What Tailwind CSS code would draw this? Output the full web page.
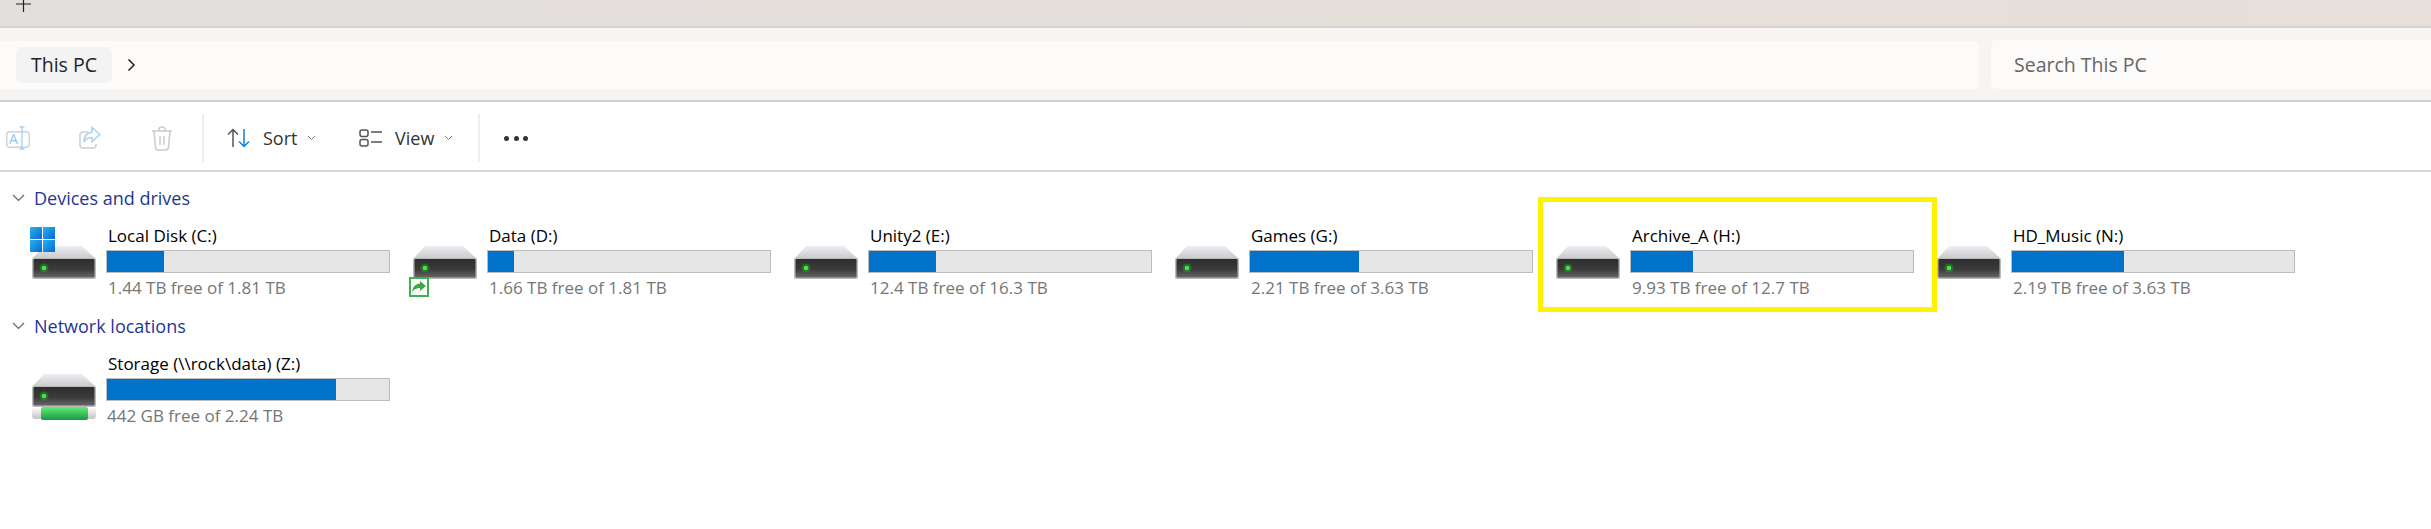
<!DOCTYPE html>
<html lang="en">
<head>
  <meta charset="UTF-8" />
  <title>This PC</title>
  <script src="https://cdn.jsdelivr.net/npm/@tailwindcss/browser@4"></script>
</head>
<body class="bg-white w-[2431px] h-[529px] overflow-hidden relative font-['Open_Sans',sans-serif]">

  <!-- shared drive icon -->
  <svg class="absolute w-0 h-0">
    <defs>
      <linearGradient id="driveTop" x1="0" y1="0" x2="0" y2="1"><stop offset="0" stop-color="#eeeff1"/><stop offset="1" stop-color="#c6c8cc"/></linearGradient>
      <linearGradient id="driveBody" x1="0" y1="0" x2="0" y2="1"><stop offset="0" stop-color="#2e2e2e"/><stop offset="0.55" stop-color="#3a3a3a"/><stop offset="1" stop-color="#666"/></linearGradient>
      <linearGradient id="netGreen" x1="0" y1="0" x2="0" y2="1"><stop offset="0" stop-color="#62ec70"/><stop offset="1" stop-color="#16994a"/></linearGradient>
      <linearGradient id="netGray" x1="0" y1="0" x2="0" y2="1"><stop offset="0" stop-color="#fafafa"/><stop offset="1" stop-color="#c4c4c4"/></linearGradient>
      <linearGradient id="winBlue" x1="0" y1="0" x2="1" y2="1"><stop offset="0" stop-color="#2cb0ee"/><stop offset="1" stop-color="#0669d2"/></linearGradient>
      <symbol id="drive" viewBox="0 0 64 33">
        <path d="M12 0H50L64 13H0Z" fill="url(#driveTop)"/>
        <rect x="0" y="12" width="64" height="21" rx="2" fill="#b9b9b9"/>
        <rect x="1.500" y="13" width="61" height="18.500" rx="1" fill="url(#driveBody)"/>
        <circle cx="12" cy="22" r="4.500" fill="#27e327" opacity="0.250"/>
        <circle cx="12" cy="22" r="2.300" fill="#36f03a"/>
      </symbol>
    </defs>
  </svg>

  <!-- title strip -->
  <div class="h-[28px] bg-[linear-gradient(90deg,#e3dfdd,#e7dfd9)] border-b-2 border-[#d8d3ce] relative overflow-hidden">
    <svg class="absolute left-[16px] top-[-3px]" width="15" height="15" fill="none" stroke="#222" stroke-width="1.200"><path d="M7.500 0v15M0 7h15"/></svg>
  </div>

  <!-- address row -->
  <div class="h-[74px] bg-[#f7f5f3] border-b-2 border-[#d3d0cc] pt-[13px] flex gap-[12px]">
    <div class="w-[1979px] h-[48px] bg-[#fcfbfa] rounded-r-[6px] flex items-center pl-[16px]">
      <div class="w-[96px] h-[36px] bg-[#f3f3f3] rounded-[7px] flex items-center justify-center text-[19.500px] text-[#222]">This PC</div>
      <svg class="ml-[15px]" width="9" height="14" fill="none" stroke="#222" stroke-width="1.500"><path d="M1.500 1.500 7 7l-5.500 5.500"/></svg>
    </div>
    <div class="flex-1 h-[49px] -mt-px bg-[#fcfbfa] rounded-l-[6px] flex items-center pl-[23px] text-[19.500px] text-[#666]">Search This PC</div>
  </div>

  <!-- command bar -->
  <div class="h-[70px] pt-[4px] border-b-2 border-[#d9d6d3] flex items-center text-[18px] text-[#333]">
    <svg class="ml-[6px]" width="24" height="24" fill="none" stroke-width="1.400">
      <rect x="0.700" y="5.700" width="22.600" height="15.600" rx="3" stroke="#c9d3da"/>
      <path d="M16 1v22M13.500 1h5M13.500 23h5" stroke="#a6d2f3"/>
      <text x="3" y="18" font-size="14" fill="#8fc6f0" stroke="none">A</text>
    </svg>
    <svg class="ml-[49px]" width="22" height="24" fill="none" stroke-width="1.500">
      <path d="M9 6H4a3 3 0 0 0-3 3v10a3 3 0 0 0 3 3h10a3 3 0 0 0 3-3v-1" stroke="#c9d0d6"/>
      <path d="M13 1.500 21 8.500l-8 7v-4c-4 0-6.500 1.500-8 4.500 0-6 3-9 8-10z" stroke="#a6d2f3"/>
    </svg>
    <svg class="ml-[50px]" width="22" height="25" fill="none" stroke="#cbcbcb" stroke-width="1.500">
      <path d="M1 5h20M3 5l1.500 16a3 3 0 0 0 3 3h7a3 3 0 0 0 3-3L19 5M8 5V3.500A2.500 2.500 0 0 1 10.500 1h1A2.500 2.500 0 0 1 14 3.500V5M9 10v9M13 10v9"/>
    </svg>
    <div class="ml-[29px] w-[2px] h-[48px] bg-[#eeeeee]"></div>
    <svg class="ml-[23px]" width="24" height="20" fill="none" stroke-width="1.500">
      <path d="M6 19V1.500M1 6.500l5-5 5 5" stroke="#555"/>
      <path d="M17 1v17.500M12 13.500l5 5 5-5" stroke="#0a84e0"/>
    </svg>
    <span class="ml-[12px] w-[34px]">Sort</span>
    <svg class="ml-[10px]" width="9" height="6" fill="none" stroke="#777"><path d="M1 1l3.500 3.500L8 1"/></svg>
    <svg class="ml-[43px]" width="24" height="18" fill="none" stroke="#555" stroke-width="1.500">
      <rect x="1" y="1" width="8" height="6.500" rx="2"/><rect x="1" y="10.500" width="8" height="6.500" rx="2"/>
      <path d="M12 3h11M12 13h11"/>
    </svg>
    <span class="ml-[12px] w-[38px]">View</span>
    <svg class="ml-[11px]" width="9" height="6" fill="none" stroke="#777"><path d="M1 1l3.500 3.500L8 1"/></svg>
    <div class="ml-[25px] w-[2px] h-[48px] bg-[#eeeeee]"></div>
    <div class="ml-[24px] flex gap-[4.500px]">
      <span class="w-[5px] h-[5px] rounded-full bg-[#333]"></span>
      <span class="w-[5px] h-[5px] rounded-full bg-[#333]"></span>
      <span class="w-[5px] h-[5px] rounded-full bg-[#333]"></span>
    </div>
  </div>

  <!-- Devices and drives -->
  <section class="pt-[14px]">
    <div class="h-[24px] flex items-center pl-[12px] text-[18px] text-[#1e3796]">
      <svg width="13" height="8" fill="none" stroke="#666" stroke-width="1.200"><path d="M1 1l5.500 5.500L12 1"/></svg>
      <span class="ml-[9px]">Devices and drives</span>
    </div>
    <div class="mt-[14px] pl-[25px] flex">
      <div class="w-[381px] h-[76px] flex relative">
        <svg class="w-[64px] h-[33px] ml-[7px] mt-[22px]"><use href="#drive"/></svg>
        <svg class="absolute left-[5px] top-[3px]" width="25" height="25" viewBox="0 0 25 25" fill="url(#winBlue)"><rect width="12" height="12"/><rect x="13" width="12" height="12"/><rect y="13" width="12" height="12"/><rect x="13" y="13" width="12" height="12"/></svg>
        <div class="ml-[10px] w-[284px]">
          <div class="h-[24px] pl-[2px] flex items-center text-[17px] text-black">Local Disk (C:)</div>
          <div class="mt-[2px] h-[23px] border border-[#bcbcbc] bg-[#e6e6e6]"><div class="h-full w-[57px] bg-[#0072c9]"></div></div>
          <div class="mt-[3px] h-[24px] pl-[2px] flex items-center text-[17px] text-[#767676]">1.44 TB free of 1.81 TB</div>
        </div>
      </div>
      <div class="w-[381px] h-[76px] flex relative">
        <svg class="w-[64px] h-[33px] ml-[7px] mt-[22px]"><use href="#drive"/></svg>
        <div class="absolute left-[3px] top-[53px] w-[20px] h-[20px] border-2 border-[#3cb44a] bg-white flex items-center justify-center">
          <svg width="14" height="12" viewBox="0 0 14 12" fill="#3aa648"><path d="M8 0l6 5-6 5V7C5 7 2 8 0 11c.500-5 3.500-8 8-8.500z"/></svg>
        </div>
        <div class="ml-[10px] w-[284px]">
          <div class="h-[24px] pl-[2px] flex items-center text-[17px] text-black">Data (D:)</div>
          <div class="mt-[2px] h-[23px] border border-[#bcbcbc] bg-[#e6e6e6]"><div class="h-full w-[26px] bg-[#0072c9]"></div></div>
          <div class="mt-[3px] h-[24px] pl-[2px] flex items-center text-[17px] text-[#767676]">1.66 TB free of 1.81 TB</div>
        </div>
      </div>
      <div class="w-[381px] h-[76px] flex">
        <svg class="w-[64px] h-[33px] ml-[7px] mt-[22px]"><use href="#drive"/></svg>
        <div class="ml-[10px] w-[284px]">
          <div class="h-[24px] pl-[2px] flex items-center text-[17px] text-black">Unity2 (E:)</div>
          <div class="mt-[2px] h-[23px] border border-[#bcbcbc] bg-[#e6e6e6]"><div class="h-full w-[67px] bg-[#0072c9]"></div></div>
          <div class="mt-[3px] h-[24px] pl-[2px] flex items-center text-[17px] text-[#767676]">12.4 TB free of 16.3 TB</div>
        </div>
      </div>
      <div class="w-[381px] h-[76px] flex">
        <svg class="w-[64px] h-[33px] ml-[7px] mt-[22px]"><use href="#drive"/></svg>
        <div class="ml-[10px] w-[284px]">
          <div class="h-[24px] pl-[2px] flex items-center text-[17px] text-black">Games (G:)</div>
          <div class="mt-[2px] h-[23px] border border-[#bcbcbc] bg-[#e6e6e6]"><div class="h-full w-[109px] bg-[#0072c9]"></div></div>
          <div class="mt-[3px] h-[24px] pl-[2px] flex items-center text-[17px] text-[#767676]">2.21 TB free of 3.63 TB</div>
        </div>
      </div>
      <div class="w-[381px] h-[76px] flex">
        <svg class="w-[64px] h-[33px] ml-[7px] mt-[22px]"><use href="#drive"/></svg>
        <div class="ml-[10px] w-[284px]">
          <div class="h-[24px] pl-[2px] flex items-center text-[17px] text-black">Archive_A (H:)</div>
          <div class="mt-[2px] h-[23px] border border-[#bcbcbc] bg-[#e6e6e6]"><div class="h-full w-[62px] bg-[#0072c9]"></div></div>
          <div class="mt-[3px] h-[24px] pl-[2px] flex items-center text-[17px] text-[#767676]">9.93 TB free of 12.7 TB</div>
        </div>
      </div>
      <div class="w-[381px] h-[76px] flex">
        <svg class="w-[64px] h-[33px] ml-[7px] mt-[22px]"><use href="#drive"/></svg>
        <div class="ml-[10px] w-[284px]">
          <div class="h-[24px] pl-[2px] flex items-center text-[17px] text-black">HD_Music (N:)</div>
          <div class="mt-[2px] h-[23px] border border-[#bcbcbc] bg-[#e6e6e6]"><div class="h-full w-[112px] bg-[#0072c9]"></div></div>
          <div class="mt-[3px] h-[24px] pl-[2px] flex items-center text-[17px] text-[#767676]">2.19 TB free of 3.63 TB</div>
        </div>
      </div>
    </div>
  </section>

  <!-- Network locations -->
  <section class="pt-[14px]">
    <div class="h-[24px] flex items-center pl-[12px] text-[18px] text-[#1e3796]">
      <svg width="13" height="8" fill="none" stroke="#666" stroke-width="1.200"><path d="M1 1l5.500 5.500L12 1"/></svg>
      <span class="ml-[9px]">Network locations</span>
    </div>
    <div class="mt-[14px] pl-[25px] flex">
      <div class="w-[381px] h-[76px] flex">
        <div class="ml-[7px] mt-[22px] w-[64px]">
          <svg class="w-[64px] h-[33px] block"><use href="#drive"/></svg>
          <svg class="block" width="64" height="13" viewBox="0 0 64 13">
            <rect x="0" y="1" width="64" height="11" rx="3" fill="url(#netGray)"/>
            <rect x="9" y="0" width="47" height="13" rx="2" fill="url(#netGreen)"/>
          </svg>
        </div>
        <div class="ml-[10px] w-[284px]">
          <div class="h-[24px] pl-[2px] flex items-center text-[17px] text-black">Storage (\\rock\data) (Z:)</div>
          <div class="mt-[2px] h-[23px] border border-[#bcbcbc] bg-[#e6e6e6]"><div class="h-full w-[229px] bg-[#0072c9]"></div></div>
          <div class="mt-[3px] h-[24px] pl-[1px] flex items-center text-[17px] text-[#767676]">442 GB free of 2.24 TB</div>
        </div>
      </div>
    </div>
  </section>

  <!-- highlight drawn over the Archive_A tile -->
  <div class="absolute left-[1538px] top-[197px] w-[399px] h-[115px] border-[5px] border-[#fff200]"></div>

</body>
</html>
